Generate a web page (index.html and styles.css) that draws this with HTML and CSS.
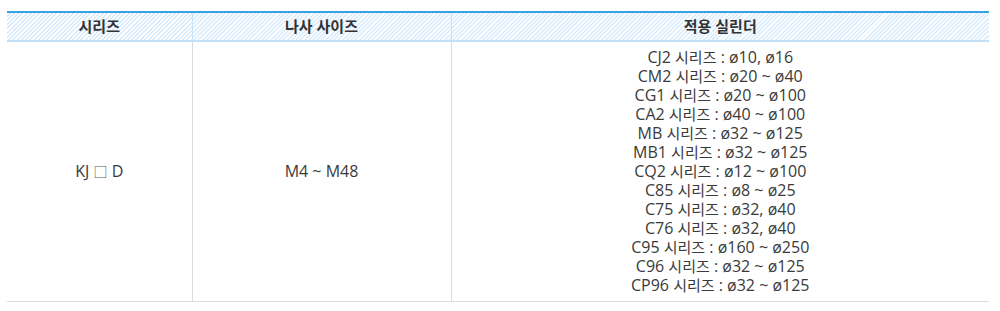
FILE: index.html
```html
<!DOCTYPE html>
<html lang="ko">
<head>
<meta charset="utf-8">
<title>시리즈</title>
<link rel="stylesheet" href="styles.css">
</head>
<body>
<div class="wrap">
  <table class="spec">
    <colgroup>
      <col class="c1">
      <col class="c2">
      <col class="c3">
    </colgroup>
    <thead>
      <tr>
        <th>시리즈</th>
        <th>나사 사이즈</th>
        <th>적용 실린더</th>
      </tr>
    </thead>
    <tbody>
      <tr>
        <td>KJ <span class="box">□</span> D</td>
        <td>M4 ~ M48</td>
        <td class="list">
          CJ2 <span class="ko">시리즈</span> : ø10, ø16<br>
          CM2 <span class="ko">시리즈</span> : ø20 ~ ø40<br>
          CG1 <span class="ko">시리즈</span> : ø20 ~ ø100<br>
          CA2 <span class="ko">시리즈</span> : ø40 ~ ø100<br>
          MB <span class="ko">시리즈</span> : ø32 ~ ø125<br>
          MB1 <span class="ko">시리즈</span> : ø32 ~ ø125<br>
          CQ2 <span class="ko">시리즈</span> : ø12 ~ ø100<br>
          C85 <span class="ko">시리즈</span> : ø8 ~ ø25<br>
          C75 <span class="ko">시리즈</span> : ø32, ø40<br>
          C76 <span class="ko">시리즈</span> : ø32, ø40<br>
          C95 <span class="ko">시리즈</span> : ø160 ~ ø250<br>
          C96 <span class="ko">시리즈</span> : ø32 ~ ø125<br>
          CP96 <span class="ko">시리즈</span> : ø32 ~ ø125
        </td>
      </tr>
    </tbody>
  </table>
</div>
</body>
</html>
```
FILE: styles.css
```css
html, body {
  margin: 0;
  padding: 0;
  background: #fff;
}

.wrap {
  padding: 11px 0 0 7px;
}

.spec {
  width: 982px;
  border-collapse: collapse;
  table-layout: fixed;
  font-family: "Open Sans", "Noto Sans CJK KR", sans-serif;
  color: #3a3a3a;
}

.c1 { width: 185px; }
.c2 { width: 259px; }
.c3 { width: 538px; }

.spec th {
  height: 27px;
  padding: 0;
  line-height: 27px;
  font-size: 15px;
  font-weight: bold;
  color: #333;
  text-align: center;
  border-top: 2px solid #35a2e2;
  border-bottom: 2px solid #c2e0f7;
  border-left: 1px solid #c8e3f8;
  border-right: 1px solid #c8e3f8;
  background: repeating-linear-gradient(135deg, #ffffff 0 1.6px, #d6eafb 1.6px 3px);
}

.spec th:first-child { border-left: none; }
.spec th:last-child { border-right: none; }

.spec td {
  padding: 6px 0;
  font-size: 16px;
  line-height: 19px;
  text-align: center;
  vertical-align: middle;
  border-bottom: 1px solid #dcdcdc;
  border-left: 1px solid #dcdcdc;
  border-right: 1px solid #dcdcdc;
}

.spec .ko {
  font-size: 15px;
}

.spec .box {
  font-family: "Noto Sans CJK KR", sans-serif;
  font-size: 14px;
  color: #555;
}

.spec td:first-child { border-left: none; }
.spec td:last-child { border-right: none; }
```
